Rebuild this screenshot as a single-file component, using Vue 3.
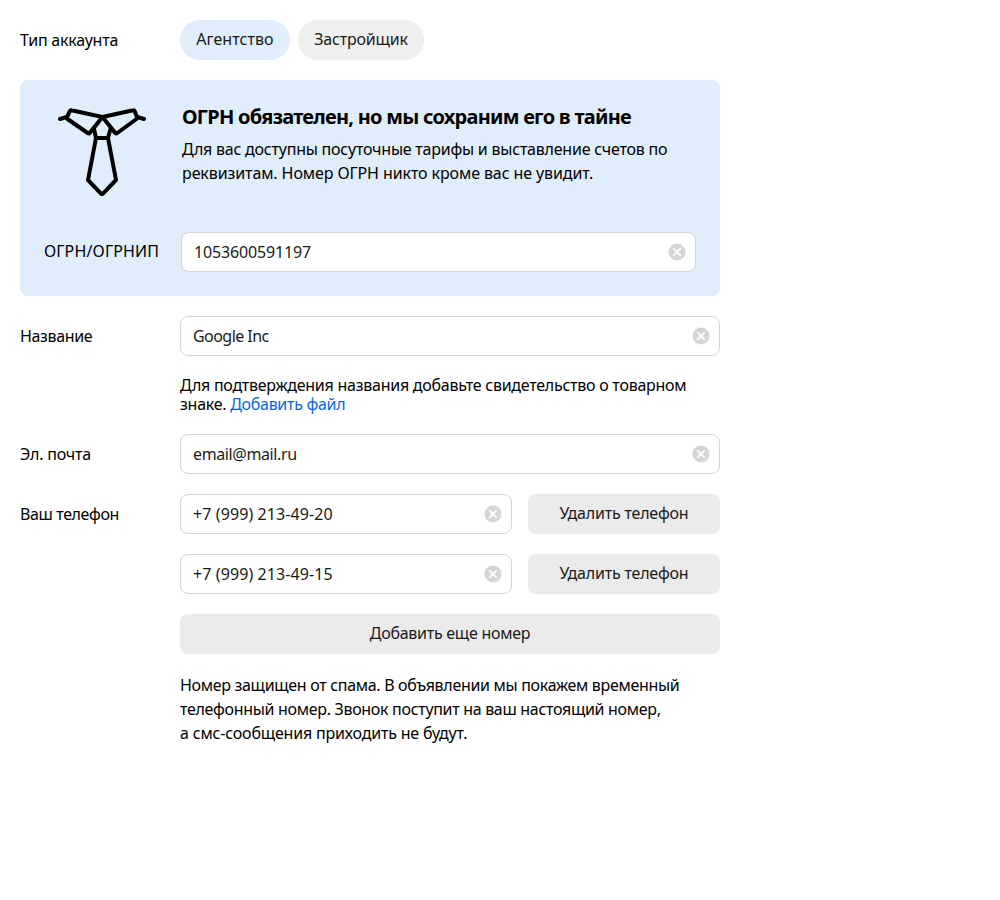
<script setup>
import { ref } from 'vue'

const types = [
  { id: 'agency', title: 'Агентство' },
  { id: 'developer', title: 'Застройщик' },
]
const active = ref('agency')
const ogrn = ref('1053600591197')
const name = ref('Google Inc')
const email = ref('email@mail.ru')
const phones = ref(['+7 (999) 213-49-20', '+7 (999) 213-49-15'])
</script>

<template>
  <form class="form" @submit.prevent>
    <div class="row">
      <div class="label label-type">Тип аккаунта</div>
      <div class="tags">
        <button
          v-for="t in types"
          :key="t.id"
          type="button"
          :class="['tag', t.id, { active: active === t.id }]"
          @click="active = t.id"
        >{{ t.title }}</button>
      </div>
    </div>

    <section class="notice">
      <div class="notice-top">
        <svg class="tie" width="88" height="88" viewBox="0 0 88 88" fill="none" stroke="#000" stroke-width="4" stroke-linecap="round" stroke-linejoin="round">
          <path d="M2 11l7-2.200M86 11l-7-2.200" />
          <path d="M44.500 9L13.500 2.300Q12.300 2 11.900 3L9 9.200Q8.700 10.300 9.500 11L29.700 25Q31 25.800 32 24.600Z" />
          <path d="M44.500 9L75 2.300Q76.200 2 76.600 3L79 9.200Q79.300 10.300 78.500 11L59.300 25Q58 25.800 57 24.600Z" />
          <path d="M36 21l2 9h12l2.500-9M38 30l-8 42 12.800 13.300q1.200 1.200 2.400 0L58 72l-8-42" />
        </svg>
        <div class="notice-text">
          <h2 class="notice-title">ОГРН обязателен, но мы сохраним его в тайне</h2>
          <p class="notice-desc">Для вас доступны посуточные тарифы и выставление счетов по<br><span class="desc-end">реквизитам. Номер ОГРН никто кроме вас не увидит.</span></p>
        </div>
      </div>
      <div class="notice-row">
        <div class="notice-label">ОГРН/ОГРНИП</div>
        <div class="field">
          <span class="value digits">{{ ogrn }}</span>
          <svg class="clear" width="18" height="18" viewBox="0 0 18 18"><circle cx="9" cy="9" r="8.500" fill="#d5d5d5" /><path d="M5.700 5.700l6.600 6.600M12.300 5.700l-6.600 6.600" stroke="#fff" stroke-width="1.700" stroke-linecap="round" /></svg>
        </div>
      </div>
    </section>

    <div class="row">
      <div class="label label-name">Название</div>
      <div class="field">
        <span class="value company">{{ name }}</span>
        <svg class="clear" width="18" height="18" viewBox="0 0 18 18"><circle cx="9" cy="9" r="8.500" fill="#d5d5d5" /><path d="M5.700 5.700l6.600 6.600M12.300 5.700l-6.600 6.600" stroke="#fff" stroke-width="1.700" stroke-linecap="round" /></svg>
      </div>
    </div>

    <p class="hint">Для подтверждения названия добавьте свидетельство о товарном<br>знаке. <a class="link">Добавить файл</a></p>

    <div class="row">
      <div class="label label-mail">Эл. почта</div>
      <div class="field">
        <span class="value mail">{{ email }}</span>
        <svg class="clear" width="18" height="18" viewBox="0 0 18 18"><circle cx="9" cy="9" r="8.500" fill="#d5d5d5" /><path d="M5.700 5.700l6.600 6.600M12.300 5.700l-6.600 6.600" stroke="#fff" stroke-width="1.700" stroke-linecap="round" /></svg>
      </div>
    </div>

    <div class="row top">
      <div class="label label-phone">Ваш телефон</div>
      <div class="phones">
        <div v-for="(p, i) in phones" :key="i" class="phone-row">
          <div class="field">
            <span class="value phone">{{ p }}</span>
            <svg class="clear" width="18" height="18" viewBox="0 0 18 18"><circle cx="9" cy="9" r="8.500" fill="#d5d5d5" /><path d="M5.700 5.700l6.600 6.600M12.300 5.700l-6.600 6.600" stroke="#fff" stroke-width="1.700" stroke-linecap="round" /></svg>
          </div>
          <button type="button" class="button remove">Удалить телефон</button>
        </div>
        <button type="button" class="button add">Добавить еще номер</button>
        <p class="spam">Номер защищен от спама. В объявлении мы покажем временный<br>телефонный номер. Звонок поступит на ваш настоящий номер,<br><span class="spam-end">а смс-сообщения приходить не будут.</span></p>
      </div>
    </div>
  </form>
</template>

<style>
body {
  background: #fff;
}
</style>

<style scoped>
.form {
  box-sizing: border-box;
  width: 740px;
  padding: 20px;
  display: flex;
  flex-direction: column;
  gap: 20px;
  font: 16px/20px 'Noto Sans', sans-serif;
  letter-spacing: -0.3px;
  color: #000;
}
p, h2 { margin: 0; }
button {
  border: 0;
  padding: 0;
  font: inherit;
  letter-spacing: inherit;
  color: #1a1a1a;
  white-space: nowrap;
}
.row { display: flex; align-items: center; }
.row.top { align-items: flex-start; }
.label { width: 160px; line-height: 40px; flex: none; white-space: nowrap; }
.label-type { letter-spacing: -0.23px; }
.label-name { letter-spacing: -0.35px; }
.label-mail { letter-spacing: -0.2px; }
.label-phone { letter-spacing: -0.38px; }
.tags { display: flex; gap: 8px; }
.tag { height: 40px; border-radius: 20px; background: #efefef; padding-bottom: 2px; }
.tag.active { background: #e0edfb; }
.agency { width: 110px; letter-spacing: 0.05px; }
.developer { width: 126px; letter-spacing: -0.2px; }
.notice {
  box-sizing: border-box;
  height: 216px;
  padding: 24px;
  border-radius: 8px;
  background: #e0edfb;
  display: flex;
  flex-direction: column;
  justify-content: space-between;
}
.notice-top { display: flex; gap: 36px; padding-left: 14px; }
.tie { margin-top: 4px; flex: none; }
.notice-title {
  padding-top: 1px;
  font-size: 20px;
  line-height: 24px;
  font-weight: 700;
  letter-spacing: -0.75px;
  white-space: nowrap;
}
.notice-desc { margin-top: 8px; line-height: 24px; letter-spacing: -0.225px; white-space: nowrap; }
.desc-end { letter-spacing: -0.1px; }
.notice-row { display: flex; align-items: center; }
.notice-label { width: 137px; flex: none; letter-spacing: 0.15px; white-space: nowrap; padding-bottom: 2px; }
.field {
  box-sizing: border-box;
  flex: 1;
  height: 40px;
  padding: 0 9px 0 12px;
  border: 1px solid #d5d5d5;
  border-radius: 8px;
  background: #fff;
  display: flex;
  align-items: center;
  justify-content: space-between;
  color: #1a1a1a;
}
.digits { letter-spacing: -0.15px; }
.company { letter-spacing: -0.55px; }
.mail { letter-spacing: -0.37px; }
.phone { letter-spacing: 0.1px; }
.clear { flex: none; }
.hint { margin-left: 160px; line-height: 19px; letter-spacing: -0.25px; white-space: nowrap; }
.link { color: #0a66dc; letter-spacing: -0.3px; }
.phones { flex: 1; display: flex; flex-direction: column; gap: 20px; }
.phone-row { display: flex; gap: 16px; }
.button { height: 40px; border-radius: 8px; background: #ebebeb; padding-bottom: 2px; }
.remove { width: 192px; letter-spacing: -0.2px; }
.add { letter-spacing: -0.26px; }
.spam { margin-top: -1px; line-height: 24px; letter-spacing: -0.31px; white-space: nowrap; }
.spam-end { letter-spacing: -0.18px; }
</style>
